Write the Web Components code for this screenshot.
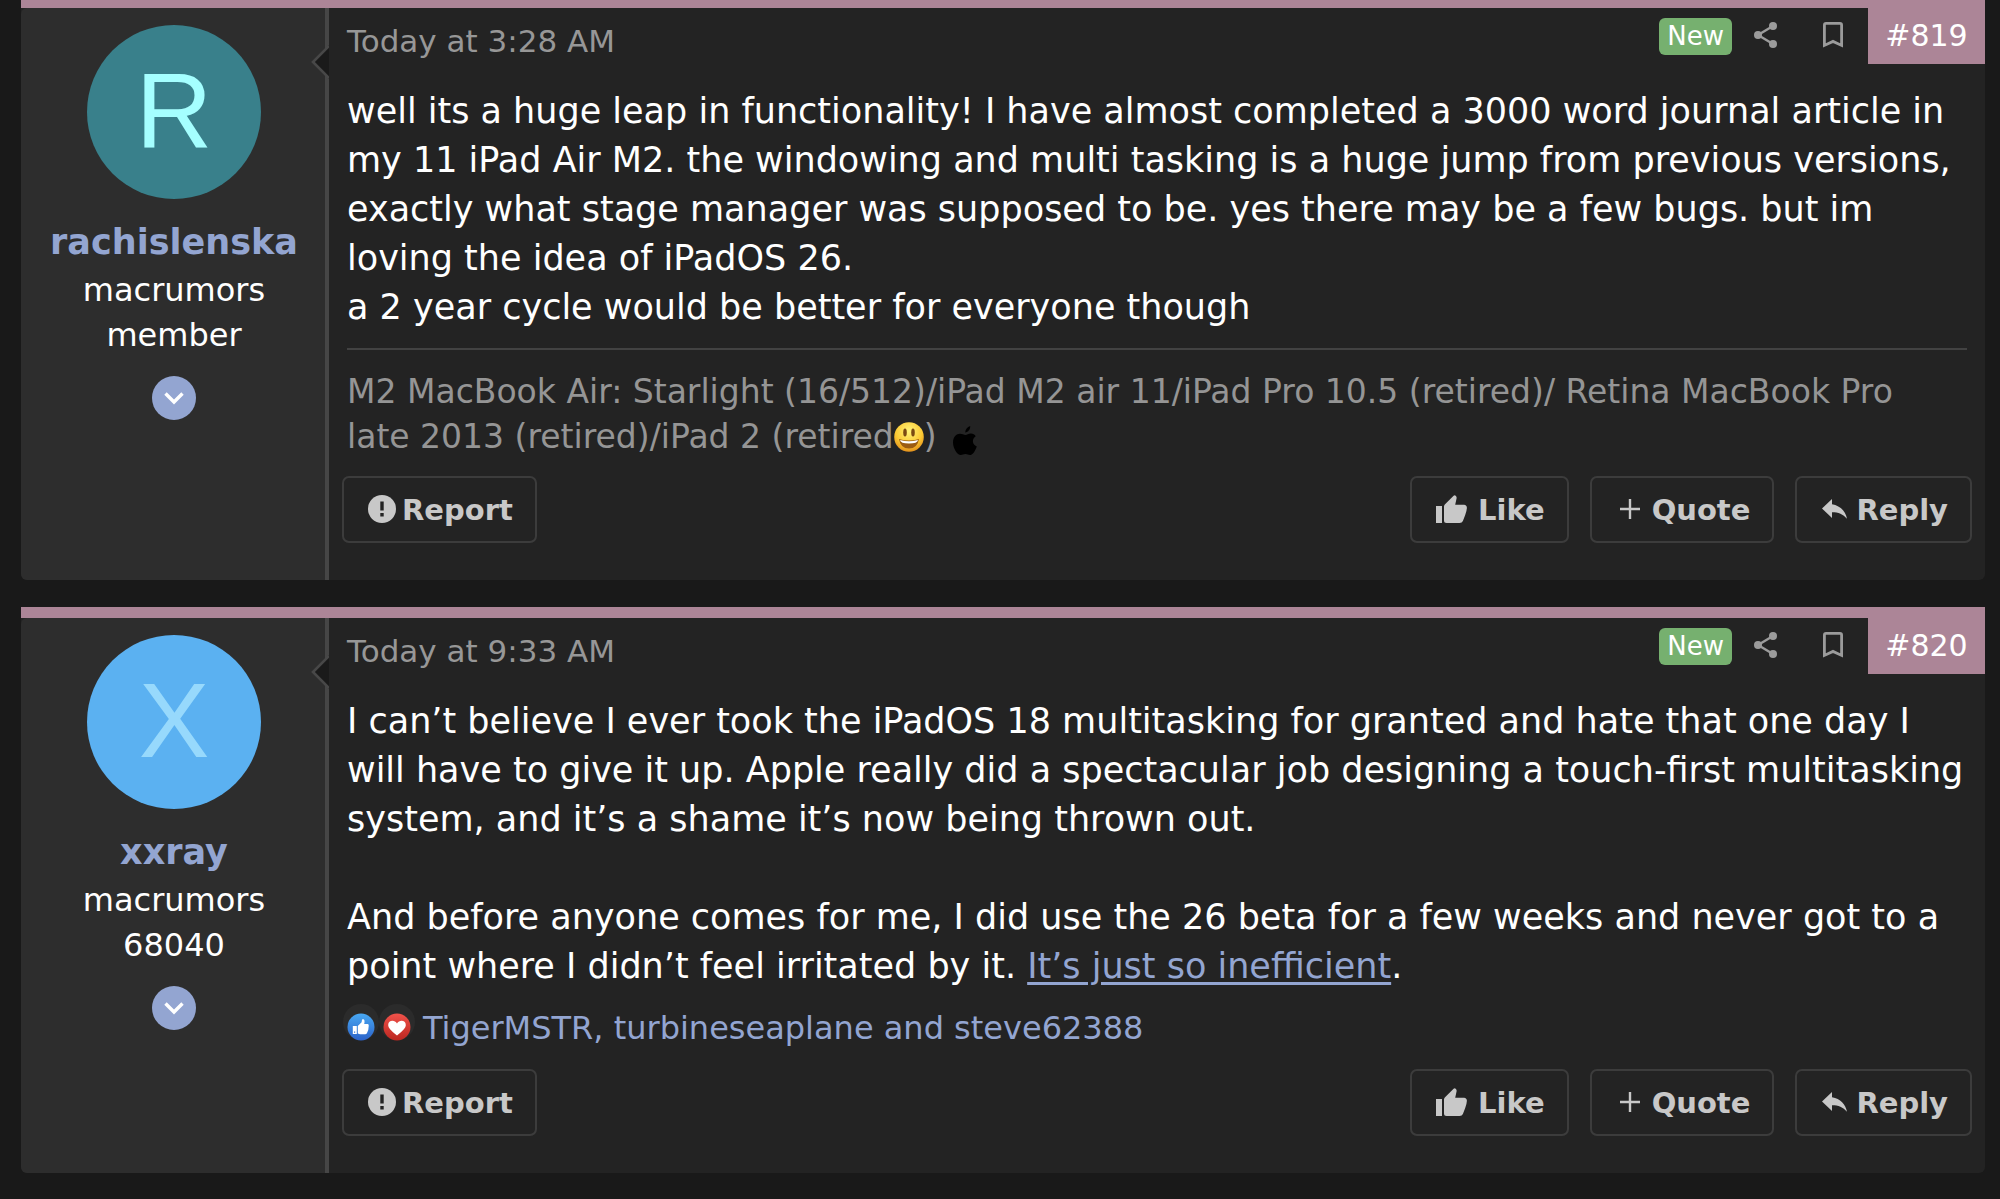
<!DOCTYPE html>
<html lang="en">
<head>
<meta charset="utf-8">
<meta name="viewport" content="width=device-width, initial-scale=1">
<title>Forum thread</title>
<style>
  html { background: #191919; }
  body { margin: 0; font-family: "DejaVu Sans", Verdana, sans-serif; color: #fff; }
</style>
</head>
<body>
<forum-thread>
  <forum-post number="819">
    <member-card slot="member" name="rachislenska" initial="R" style="--avatar-bg:#39808b;--avatar-fg:#a5ffff">macrumors member</member-card>
    <span slot="time">Today at 3:28 AM</span>
    well its a huge leap in functionality! I have almost completed a 3000 word journal article in<br>
    my 11 iPad Air M2. the windowing and multi tasking is a huge jump from previous versions,<br>
    exactly what stage manager was supposed to be. yes there may be a few bugs. but im<br>
    loving the idea of iPadOS 26.<br>
    a 2 year cycle would be better for everyone though
    <post-signature slot="after">M2 MacBook Air: Starlight (16/512)/iPad M2 air 11/iPad Pro 10.5 (retired)/ Retina MacBook Pro<br>
    late 2013 (retired)/iPad 2 (retired<ui-icon name="smile"></ui-icon>) <ui-icon name="apple"></ui-icon></post-signature>
  </forum-post>
  <forum-post number="820">
    <member-card slot="member" name="xxray" initial="X" style="--avatar-bg:#5bb1f1;--avatar-fg:#97d9fc">macrumors 68040</member-card>
    <span slot="time">Today at 9:33 AM</span>
    I can’t believe I ever took the iPadOS 18 multitasking for granted and hate that one day I<br>
    will have to give it up. Apple really did a spectacular job designing a touch-first multitasking<br>
    system, and it’s a shame it’s now being thrown out.<br>
    <br>
    And before anyone comes for me, I did use the 26 beta for a few weeks and never got to a<br>
    point where I didn’t feel irritated by it. <a href="#inefficient">It’s just so inefficient</a>.
    <post-reactions slot="after">TigerMSTR, turbineseaplane and steve62388</post-reactions>
  </forum-post>
</forum-thread>

<script>
const ICONS = {
  share: [24, 26, '<g fill="#9b9b9b"><circle cx="19" cy="4" r="4"/><circle cx="4" cy="13" r="4"/><circle cx="19" cy="22" r="4"/></g><path d="M19 4 4 13l15 9" fill="none" stroke="#9b9b9b" stroke-width="2.4"/>'],
  bookmark: [20, 26, '<path d="M1.4 23.4V3q0-1.6 1.6-1.6h14q1.6 0 1.6 1.6v20.400L10 19.400z" fill="none" stroke="#9b9b9b" stroke-width="2.8"/>'],
  report: [28, 28, '<circle cx="14" cy="14" r="14" fill="#c8c8c8"/><path d="M14 6.500v9M14 18v3.500" stroke="#232323" stroke-width="3.4"/>'],
  like: [31, 28, '<path fill="#c8c8c8" d="M0 11h6v17H0zM8 25.500V11.500q0-1.100.8-2L17.600.7q1-1.100 2.100 0 1.200 1.100.9 2.500L19.200 9.800H28q2.800.3 2.900 3-.2 3.500-1.700 7.200l-2.300 6Q26 28 23.600 28H10.500Q8 28 8 25.500z"/>'],
  plus: [20, 20, '<path d="M10 0v20M0 10h20" stroke="#c8c8c8" stroke-width="2.4"/>'],
  reply: [25, 20, '<path fill="#c8c8c8" d="M10 0v5.200C18.500 6.800 23.500 12 25 19.800 21 15.200 16.500 13.300 10 13.300V19L0 9.500z"/>'],
  chevron: [20, 14, '<path d="M1.500 2.500 10 11l8.500-8.500" fill="none" stroke="#fff" stroke-width="3.4"/>'],
  smile: [30, 30, '<defs><radialGradient id="f" cx=".5" cy=".3" r=".75"><stop offset="0" stop-color="#fff47a"/><stop offset=".6" stop-color="#fbc832"/><stop offset="1" stop-color="#dd8518"/></radialGradient></defs><circle cx="15" cy="15" r="14.800" fill="url(#f)"/><ellipse cx="11" cy="10.500" rx="1.800" ry="4" fill="#7b4a12"/><ellipse cx="19" cy="10.500" rx="1.800" ry="4" fill="#7b4a12"/><path d="M5 17q10 3 20 0-1.500 9.500-10 9.500T5 17z" fill="#9b5b13"/><path d="M6 18q9 2.500 18 0-.5 3.500-9 3.500T6 18z" fill="#fff"/>'],
  apple: [24, 29, '<path fill="#000" d="M12.200 6.500c.2-3 2-5.600 5-6.500.3 3.200-2 6.300-5 6.500zM12.500 9c1.500 0 3-1.500 5.500-1.400 2 .1 3.700 1 4.700 2.600-4.200 2.700-3.500 8.400 1.100 10.200C22.400 24.600 19.700 29 17 29c-1.800 0-2.600-1-4.600-1s-2.900 1-4.600 1C4.300 29 0 22.500 0 16.500 0 11 3.400 7.800 7 7.800c2.200 0 3.900 1.200 5.500 1.200z"/>'],
  thumb: [36, 38, '<defs><linearGradient id="b" x1="0" y1="0" x2="0" y2="1"><stop offset="0" stop-color="#48a8f2"/><stop offset="1" stop-color="#2c62c8"/></linearGradient></defs><circle cx="18" cy="18" r="18" fill="#2b2b2b"/><circle cx="18" cy="23" r="13.500" fill="url(#b)"/><path fill="#fff" fill-rule="evenodd" d="M9.800 22h4v8h-4zM11 27.600h1.200v1.200H11zM14.800 29.500V22l3.800-3.800q.2-3.600 1.800-3 1.800.7.800 4.900h3.600q1.400.6.900 1.900 0 4.500-1.700 7-.5 1.300-2 1.300h-5z"/>'],
  heart: [36, 38, '<defs><linearGradient id="r" x1="0" y1="0" x2="0" y2="1"><stop offset="0" stop-color="#f0524a"/><stop offset="1" stop-color="#bb2620"/></linearGradient></defs><circle cx="18" cy="18" r="18" fill="#2b2b2b"/><circle cx="18" cy="23" r="13.500" fill="url(#r)"/><path fill="#fff" d="M18 31.500C12 26.500 9.200 24 9.200 21c0-5 6.500-5.500 8.800-1.600 2.300-3.900 8.800-3.400 8.800 1.600 0 3-2.800 5.500-8.800 10.500z"/>']
};

class Base extends HTMLElement {
  constructor() { super(); this.attachShadow({ mode: "open" }); }
  connectedCallback() { this.shadowRoot.innerHTML = this.render(); }
  attr(n) { return this.getAttribute(n) || ""; }
}

customElements.define("ui-icon", class extends Base {
  render() {
    const [w, h, body] = ICONS[this.attr("name")];
    return `<style>:host{display:inline-block;flex:none;line-height:0}:host([name=smile]){vertical-align:-4px}:host([name=apple]){vertical-align:-7px;padding-left:6px}svg{display:block}</style>
      <svg width="${w}" height="${h}" viewBox="0 0 ${w} ${h}" aria-hidden="true">${body}</svg>`;
  }
});

customElements.define("forum-thread", class extends Base {
  render() {
    return `<style>:host{display:flex;flex-direction:column;gap:27px;padding:0 15px 26px 21px;overflow:hidden}
      ::slotted(:first-child){margin-top:-3px}</style><slot></slot>`;
  }
});

customElements.define("member-card", class extends Base {
  render() {
    return `<style>
      :host{display:flex;flex-direction:column;align-items:center;padding:17px 18px 0 20px;text-align:center}
      .avatar{width:174px;height:174px;border-radius:50%;background:var(--avatar-bg);color:var(--avatar-fg);font-family:"Liberation Sans",Arial,sans-serif;font-size:106px;line-height:170px;text-decoration:none}
      .name{margin:20px 0 3px;font-weight:bold;font-size:35px;line-height:46px;color:#93a5d1;text-decoration:none}
      .title{width:200px;font-size:32px;line-height:45px}
      button{display:flex;align-items:center;justify-content:center;margin-top:18px;width:44px;height:44px;padding:0;border:0;border-radius:50%;background:#93a5d1}
    </style>
    <a class="avatar" href="#${this.attr("name")}">${this.attr("initial")}</a>
    <a class="name" href="#${this.attr("name")}">${this.attr("name")}</a>
    <div class="title"><slot></slot></div>
    <button aria-label="Show member details"><ui-icon name="chevron"></ui-icon></button>`;
  }
});

customElements.define("action-button", class extends Base {
  render() {
    return `<style>
      :host{display:block}
      button{display:flex;align-items:center;gap:var(--gap,8px);box-sizing:border-box;height:67px;padding:0 22px 0 var(--lead,24px);border:2px solid #3c3c3c;border-radius:7px;background:none;color:#c8c8c8;font:bold 29px/40px "DejaVu Sans",Verdana,sans-serif}
      ui-icon{padding-bottom:2px}
    </style><button><ui-icon name="${this.attr("icon")}"></ui-icon><slot></slot></button>`;
  }
});

customElements.define("post-signature", class extends Base {
  render() {
    return `<style>:host{display:block;margin-top:16px;border-top:2px solid #424242;padding-top:19px;font-size:33px;line-height:45px;color:#959595}</style><slot></slot>`;
  }
});

customElements.define("post-reactions", class extends Base {
  render() {
    return `<style>:host{display:flex;align-items:center;margin:13px 0 0 -4px;font-size:32px;line-height:46px;color:#93a5d1}
      ui-icon{padding-bottom:10px}
      a{color:inherit;text-decoration:none;margin-left:8px}</style>
      <ui-icon name="thumb"></ui-icon><ui-icon name="heart"></ui-icon><a href="#reactions"><slot></slot></a>`;
  }
});

customElements.define("forum-post", class extends Base {
  render() {
    const n = this.attr("number");
    return `<style>
      :host{display:block}
      article{display:flex;border-top:11px solid #ac8597;border-radius:0 0 6px 6px;background:#232323}
      aside{position:relative;box-sizing:border-box;flex:none;width:308px;border-right:4px solid #464646;border-radius:6px 0 0 6px;background:#2d2d2d}
      .arrow{position:absolute;top:37px;right:-4px;display:block}
      .main{flex:1;min-width:0;padding-left:18px}
      header{display:flex;align-items:flex-start;height:79px}
      .time{flex:1;color:#979797;font-size:31px;line-height:40px;padding-top:13px}
      .new{margin-top:10px;border-radius:6px;padding:0 8px;background:#76b06f;color:#fff;font-size:26px;line-height:37px}
      button{margin:14px 0 0;padding:0;border:0;background:none}
      .share{margin-left:22px}
      .mark{margin-left:45px}
      .num{margin-left:25px;box-sizing:border-box;min-width:117px;height:56px;padding-top:10px;text-align:center;background:#ac8597;color:#fff;font-size:30px;line-height:36px;text-decoration:none}
      .body{padding-right:18px;font-size:35px;line-height:49px;white-space:nowrap}
      footer{display:flex;justify-content:space-between;margin-left:-5px;padding:17px 13px 37px 0}
      .group{display:flex;gap:21px}
      ::slotted(a){color:#93a5d1;text-underline-offset:4px}
    </style>
    <article>
      <aside><slot name="member"></slot>
        <svg class="arrow" width="18" height="34" viewBox="0 0 18 34" aria-hidden="true"><path d="M18 0v34L1 17z" fill="#1a1a1a"/><path d="M18 1 2 17l16 16" fill="none" stroke="#484848" stroke-width="2.600"/></svg>
      </aside>
      <div class="main">
        <header>
          <div class="time"><slot name="time"></slot></div>
          <span class="new">New</span>
          <button class="share" aria-label="Share"><ui-icon name="share"></ui-icon></button>
          <button class="mark" aria-label="Bookmark"><ui-icon name="bookmark"></ui-icon></button>
          <a class="num" href="#post-${n}">#${n}</a>
        </header>
        <div class="body"><div><slot></slot></div><slot name="after"></slot></div>
        <footer>
          <action-button icon="report" style="--gap:6px">Report</action-button>
          <div class="group">
            <action-button icon="like" style="--gap:11px">Like</action-button>
            <action-button icon="plus" style="--gap:12px;--lead:28px">Quote</action-button>
            <action-button icon="reply" style="--gap:9px;--lead:25px">Reply</action-button>
          </div>
        </footer>
      </div>
    </article>`;
  }
});
</script>
</body>
</html>
